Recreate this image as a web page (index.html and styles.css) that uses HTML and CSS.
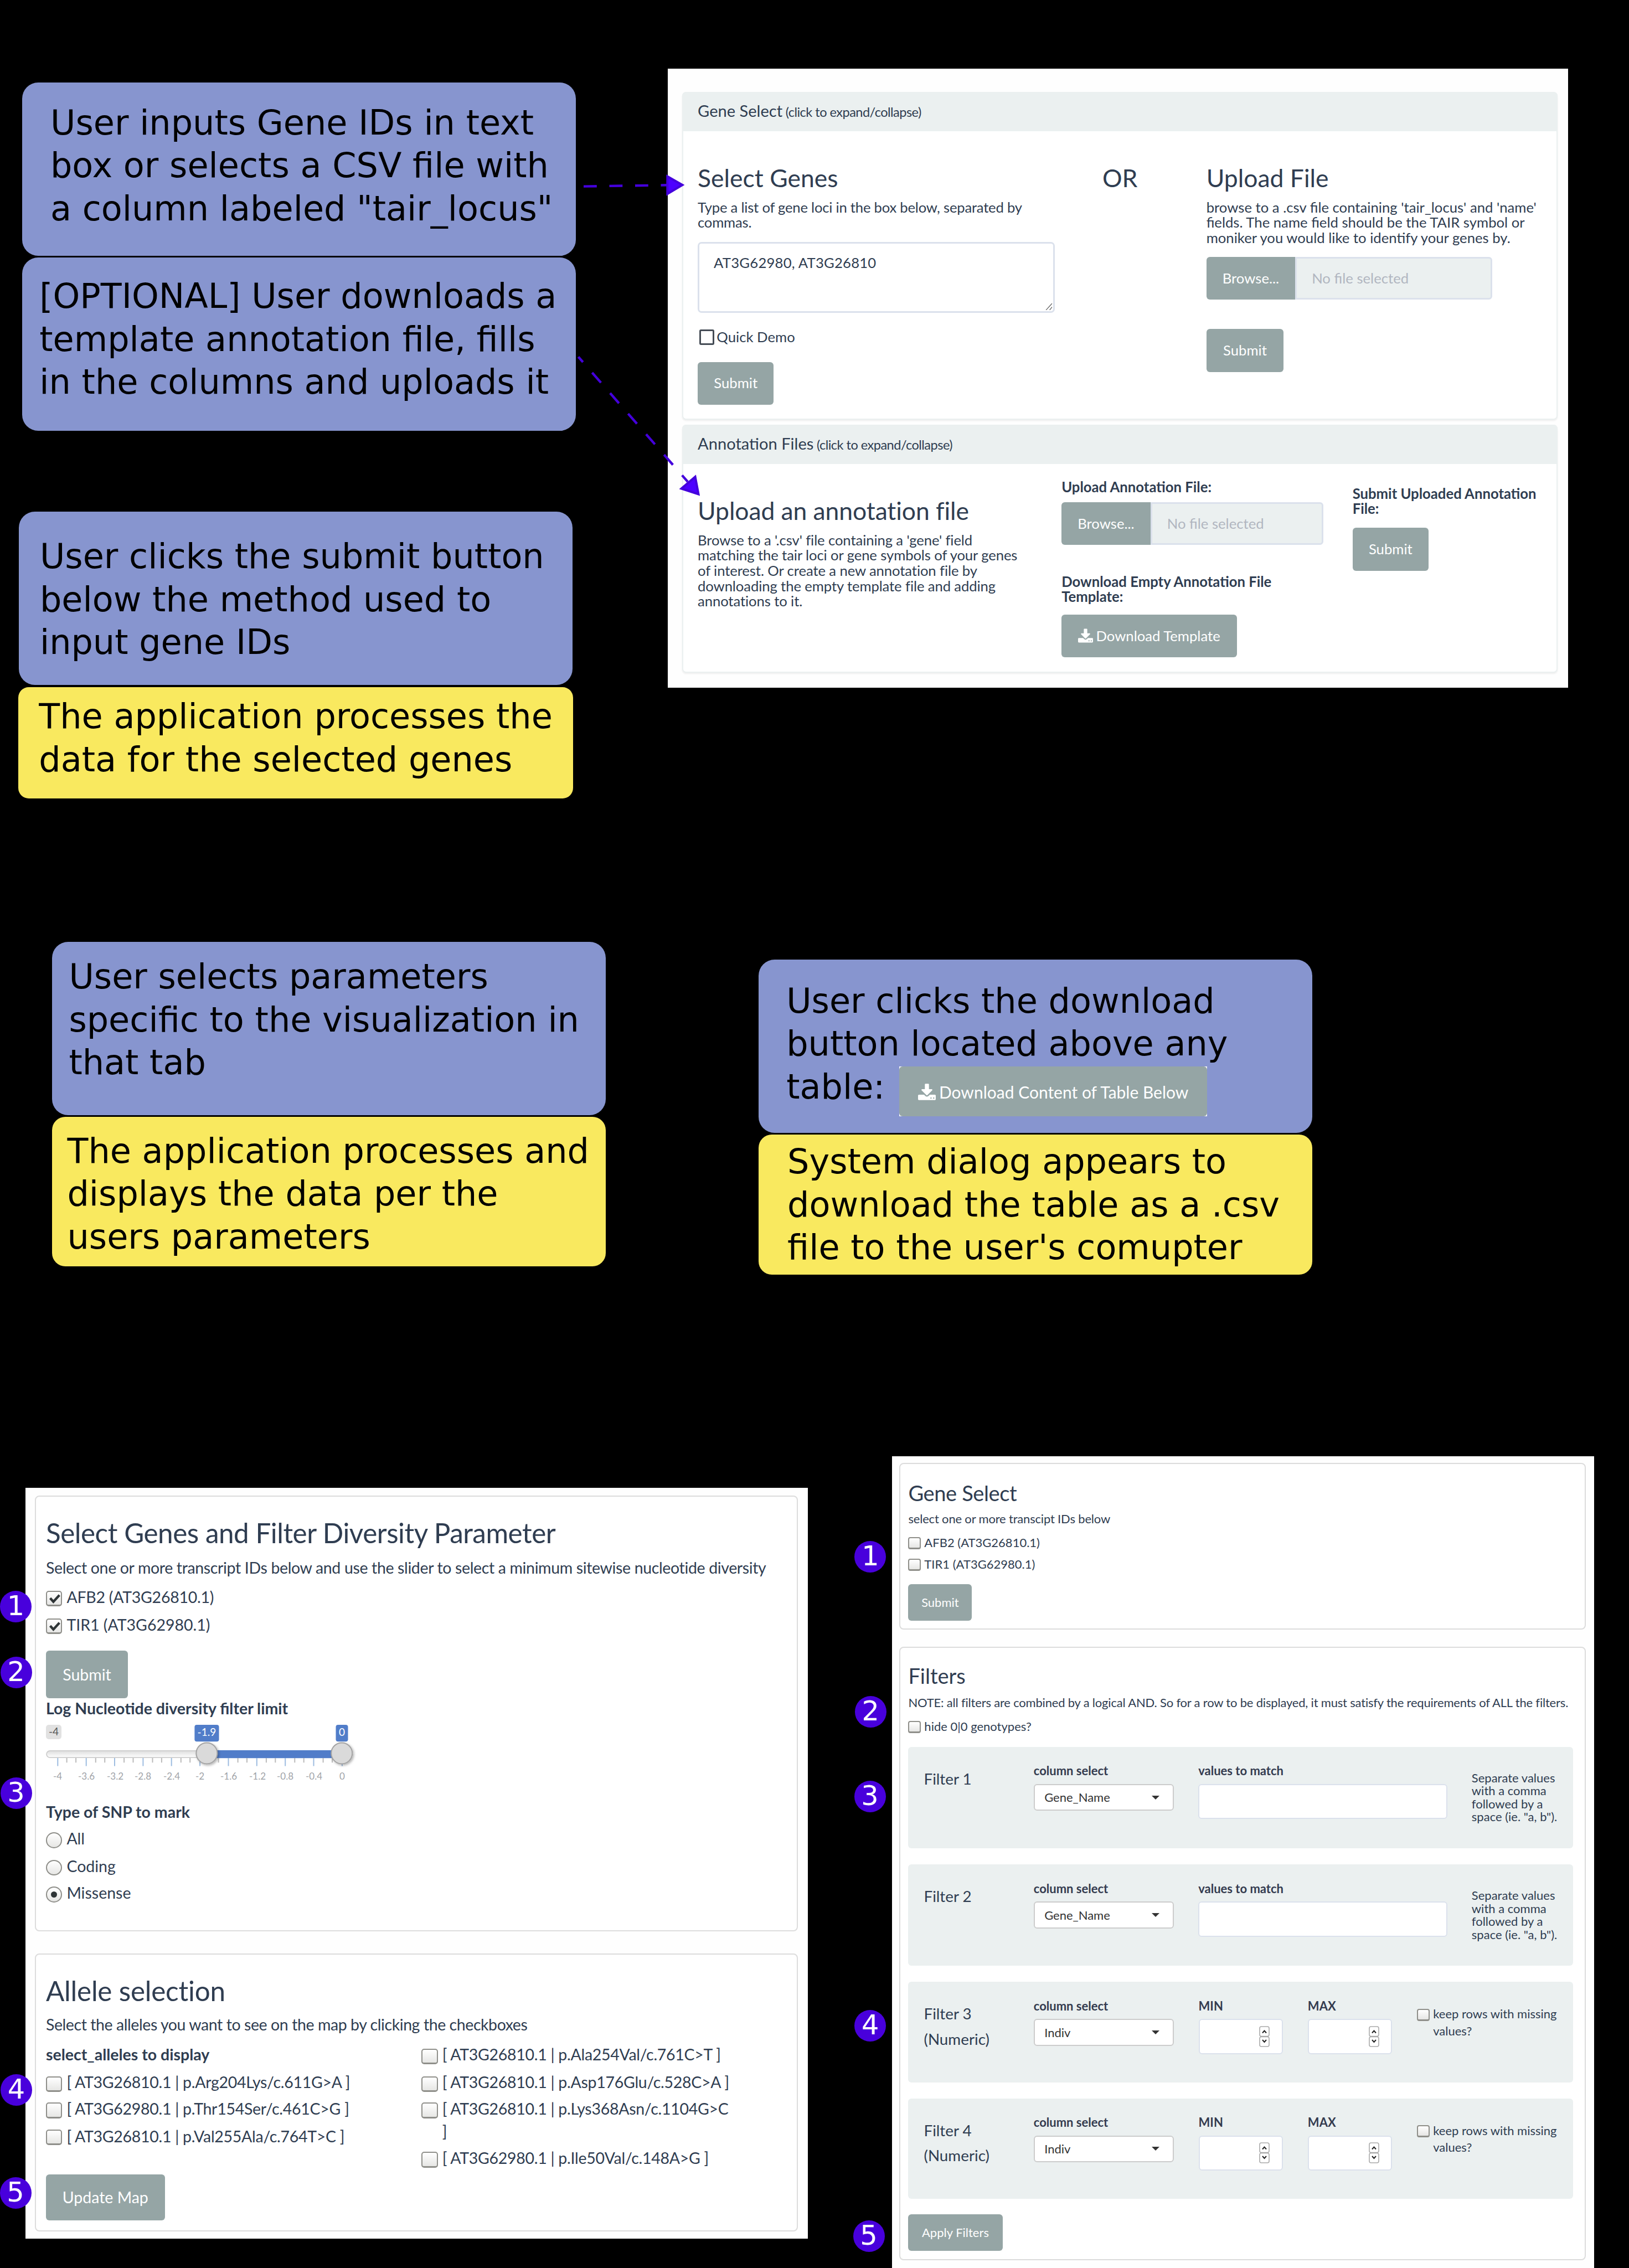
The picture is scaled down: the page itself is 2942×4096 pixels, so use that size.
FILE: index.html
```html
<!DOCTYPE html>
<html lang="en">
<head>
<meta charset="utf-8">
<title>Application workflow</title>
<link rel="stylesheet" href="styles.css">
</head>
<body>
<svg class="defs" width="0" height="0">
  <symbol id="download" viewBox="64 0 1664 1536"><path d="M1344 1344q0-26-19-45t-45-19-45 19-19 45 19 45 45 19 45-19 19-45zm256 0q0-26-19-45t-45-19-45 19-19 45 19 45 45 19 45-19 19-45zm128-224v320q0 40-28 68t-68 28h-1472q-40 0-68-28t-28-68v-320q0-40 28-68t68-28h465l135 136q58 56 136 56t136-56l136-136h464q40 0 68 28t28 68zm-325-569q17 41-14 70l-448 448q-18 19-45 19t-45-19l-448-448q-31-29-14-70 17-39 59-39h256v-448q0-26 19-45t45-19h256q26 0 45 19t19 45v448h256q42 0 59 39z"/></symbol>
</svg>
<main class="canvas">
  <div class="step step-1">User inputs Gene IDs in text<br>box or selects a CSV file with<br>a column labeled "tair_locus"</div>
  <div class="step step-2">[OPTIONAL] User downloads a<br>template annotation file, fills<br>in the columns and uploads it</div>
  <div class="step step-3">User clicks the submit button<br>below the method used to<br>input gene IDs</div>
  <div class="step step-4 app">The application processes the<br>data for the selected genes</div>
  <div class="step step-5">User selects parameters<br>specific to the visualization in<br>that tab</div>
  <div class="step step-6 app">The application processes and<br>displays the data per the<br>users parameters</div>
  <div class="step step-7">User clicks the download<br>button located above any<br>table:</div>
  <div class="step step-8 app">System dialog appears to<br>download the table as a .csv<br>file to the user's comupter</div>
  <div class="snippet"><div class="btn"><svg class="dl"><use href="#download"/></svg><span>Download Content of Table Below</span></div></div>

  <section class="panel inputs">
    <div class="card genes">
      <header>Gene Select<small>&nbsp;(click to expand/collapse)</small></header>
      <div class="body">
        <div class="col">
          <h3>Select Genes</h3>
          <p class="tight">Type a list of gene loci in the box below, separated by<br>commas.</p>
          <div class="textarea">AT3G62980, AT3G26810<svg class="grip" viewBox="0 0 12 12"><path d="M1 12L11 1M7 12L11 7"/></svg></div>
          <div class="demo"><i></i><span>Quick Demo</span></div>
          <div class="btn submit">Submit</div>
        </div>
        <div class="col"><h3 class="or">OR</h3></div>
        <div class="col">
          <h3>Upload File</h3>
          <p>browse to a .csv file containing 'tair_locus' and 'name'<br>fields. The name field should be the TAIR symbol or<br>moniker you would like to identify your genes by.</p>
          <div class="file"><div class="btn">Browse...</div><div class="name">No file selected</div></div>
          <div class="btn submit wide">Submit</div>
        </div>
      </div>
    </div>
    <div class="card annot">
      <header>Annotation Files<small>&nbsp;(click to expand/collapse)</small></header>
      <div class="body">
        <div class="col">
          <h3>Upload an annotation file</h3>
          <p class="about">Browse to a '.csv' file containing a 'gene' field<br>matching the tair loci or gene symbols of your genes<br>of interest. Or create a new annotation file by<br>downloading the empty template file and adding<br>annotations to it.</p>
        </div>
        <div class="col">
          <b class="lead">Upload Annotation File:</b>
          <div class="file"><div class="btn">Browse...</div><div class="name">No file selected</div></div>
          <b class="second">Download Empty Annotation File<br>Template:</b>
          <div class="btn template"><svg class="dl"><use href="#download"/></svg><span>Download Template</span></div>
        </div>
        <div class="col">
          <b class="right">Submit Uploaded Annotation<br>File:</b>
          <div class="btn submit">Submit</div>
        </div>
      </div>
    </div>
  </section>

  <section class="panel diversity">
    <div class="card params">
      <h3>Select Genes and Filter Diversity Parameter</h3>
      <p>Select one or more transcript IDs below and use the slider to select a minimum sitewise nucleotide diversity</p>
      <div class="check on c1"><i><svg viewBox="0 0 13 13"><path d="M2.6 6.2l3.2 3.6 6-6.6"/></svg></i><span>AFB2 (AT3G26810.1)</span></div>
      <div class="check on c2"><i><svg viewBox="0 0 13 13"><path d="M2.6 6.2l3.2 3.6 6-6.6"/></svg></i><span>TIR1 (AT3G62980.1)</span></div>
      <div class="btn submit">Submit</div>
      <b class="log">Log Nucleotide diversity filter limit</b>
      <svg class="slider" width="580" height="105" viewBox="0 0 580 105">
        <defs>
          <linearGradient id="rail" x1="0" y1="0" x2="0" y2="1"><stop offset="0" stop-color="#ddd"/><stop offset="1" stop-color="#fff"/></linearGradient>
          <filter id="soft" x="-30%" y="-30%" width="170%" height="170%"><feDropShadow dx="2" dy="2" stdDeviation="2" flood-opacity=".3"/></filter>
        </defs>
        <rect x="0" y="0" width="28" height="26" rx="5" fill="#e1e1e1"/>
        <rect x="268.4" y="0" width="44.1" height="30.2" rx="4" fill="#517dc9"/>
        <rect x="523.5" y="0" width="22" height="30.2" rx="4" fill="#517dc9"/>
        <rect x="1" y="46.8" width="552" height="12.4" rx="6.5" fill="url(#rail)" stroke="#ccc" stroke-width="1.7"/>
        <rect x="290" y="45.9" width="245" height="14.3" fill="#517dc9"/>
        <path class="major" d="M21.3 60V74.6M72.7 60V74.6M124 60V74.6M175.4 60V74.6M226.7 60V74.6M278.1 60V74.6M329.5 60V74.6M380.8 60V74.6M432.2 60V74.6M483.5 60V74.6M534.9 60V74.6"/>
        <path class="minor" d="M37.6 60V68.3M54.1 60V68.3M89.8 60V68.3M106.2 60V68.3M141.1 60V68.3M157.5 60V68.3M192.5 60V68.3M208.9 60V68.3M243.8 60V68.3M260.2 60V68.3M295.2 60V68.3M311.6 60V68.3M346.6 60V68.3M363 60V68.3M397.9 60V68.3M414.3 60V68.3M449.3 60V68.3M465.7 60V68.3M500.6 60V68.3M517 60V68.3"/>
        <g class="handles" filter="url(#soft)"><circle cx="290.4" cy="51.4" r="19"/><circle cx="534.2" cy="51.4" r="19"/></g>
        <g class="tags"><text class="min" x="14" y="19.2">-4</text><text x="290.4" y="20">-1.9</text><text x="534.6" y="20">0</text></g>
        <g class="scale"><text x="21" y="99">-4</text><text x="73" y="99">-3.6</text><text x="125" y="99">-3.2</text><text x="175" y="99">-2.8</text><text x="227" y="99">-2.4</text><text x="278" y="99">-2</text><text x="330" y="99">-1.6</text><text x="382" y="99">-1.2</text><text x="432" y="99">-0.8</text><text x="484" y="99">-0.4</text><text x="535" y="99">0</text></g>
      </svg>
      <b class="snp">Type of SNP to mark</b>
      <div class="check radio r1"><i></i><span>All</span></div>
      <div class="check radio r2"><i></i><span>Coding</span></div>
      <div class="check radio sel r3"><i></i><span>Missense</span></div>
    </div>
    <div class="card alleles">
      <h3>Allele selection</h3>
      <p>Select the alleles you want to see on the map by clicking the checkboxes</p>
      <div class="cols">
        <div>
          <b>select_alleles to display</b>
          <div class="check a1"><i></i><span>[ AT3G26810.1 | p.Arg204Lys/c.611G&gt;A ]</span></div>
          <div class="check a2"><i></i><span>[ AT3G62980.1 | p.Thr154Ser/c.461C&gt;G ]</span></div>
          <div class="check a3"><i></i><span>[ AT3G26810.1 | p.Val255Ala/c.764T&gt;C ]</span></div>
          <div class="btn update">Update Map</div>
        </div>
        <div>
          <div class="check a4"><i></i><span>[ AT3G26810.1 | p.Ala254Val/c.761C&gt;T ]</span></div>
          <div class="check a5"><i></i><span>[ AT3G26810.1 | p.Asp176Glu/c.528C&gt;A ]</span></div>
          <div class="check a6"><i></i><span>[ AT3G26810.1 | p.Lys368Asn/c.1104G&gt;C<br>]</span></div>
          <div class="check a7"><i></i><span>[ AT3G62980.1 | p.Ile50Val/c.148A&gt;G ]</span></div>
        </div>
      </div>
    </div>
  </section>

  <section class="panel table">
    <div class="card select">
      <h3>Gene Select</h3>
      <p>select one or more transcipt IDs below</p>
      <div class="check t1"><i></i><span>AFB2 (AT3G26810.1)</span></div>
      <div class="check t2"><i></i><span>TIR1 (AT3G62980.1)</span></div>
      <div class="btn submit">Submit</div>
    </div>
    <div class="card filters">
      <h3>Filters</h3>
      <p class="note">NOTE: all filters are combined by a logical AND. So for a row to be displayed, it must satisfy the requirements of ALL the filters.</p>
      <div class="check t3"><i></i><span>hide 0|0 genotypes?</span></div>
      <div class="wells">
        <div class="well">
          <h4>Filter 1</h4>
          <div><b>column select</b><div class="dropdown">Gene_Name<em></em></div></div>
          <div><b>values to match</b><div class="input"></div></div>
          <p class="hint">Separate values<br>with a comma<br>followed by a<br>space (ie. "a, b").</p>
        </div>
        <div class="well">
          <h4>Filter 2</h4>
          <div><b>column select</b><div class="dropdown">Gene_Name<em></em></div></div>
          <div><b>values to match</b><div class="input"></div></div>
          <p class="hint">Separate values<br>with a comma<br>followed by a<br>space (ie. "a, b").</p>
        </div>
        <div class="well numeric">
          <h4>Filter 3<br>(Numeric)</h4>
          <div><b>column select</b><div class="dropdown">Indiv<em></em></div></div>
          <div><b>MIN</b><div class="input num"><svg class="spin" viewBox="0 0 19 38"><rect x="1" y="1" width="17" height="17.5" rx="3"/><rect x="1" y="19.5" width="17" height="17.5" rx="3"/><path d="M6 12.5L9.5 8.5L13 12.5M6 25L9.5 29L13 25"/></svg></div></div>
          <div><b>MAX</b><div class="input num"><svg class="spin" viewBox="0 0 19 38"><rect x="1" y="1" width="17" height="17.5" rx="3"/><rect x="1" y="19.5" width="17" height="17.5" rx="3"/><path d="M6 12.5L9.5 8.5L13 12.5M6 25L9.5 29L13 25"/></svg></div></div>
          <div class="check keep"><i></i><span>keep rows with missing<br>values?</span></div>
        </div>
        <div class="well numeric">
          <h4>Filter 4<br>(Numeric)</h4>
          <div><b>column select</b><div class="dropdown">Indiv<em></em></div></div>
          <div><b>MIN</b><div class="input num"><svg class="spin" viewBox="0 0 19 38"><rect x="1" y="1" width="17" height="17.5" rx="3"/><rect x="1" y="19.5" width="17" height="17.5" rx="3"/><path d="M6 12.5L9.5 8.5L13 12.5M6 25L9.5 29L13 25"/></svg></div></div>
          <div><b>MAX</b><div class="input num"><svg class="spin" viewBox="0 0 19 38"><rect x="1" y="1" width="17" height="17.5" rx="3"/><rect x="1" y="19.5" width="17" height="17.5" rx="3"/><path d="M6 12.5L9.5 8.5L13 12.5M6 25L9.5 29L13 25"/></svg></div></div>
          <div class="check keep"><i></i><span>keep rows with missing<br>values?</span></div>
        </div>
      </div>
      <div class="btn apply">Apply Filters</div>
    </div>
  </section>

  <svg class="arrows" width="300" height="620" viewBox="1000 300 300 620">
    <path class="line" stroke-dasharray="23.8 22.7" d="M1054 336.6L1206 334.3"/>
    <path class="line" stroke-dasharray="24.2 25.1" stroke-dashoffset="11.5" d="M1044.5 644.5L1242 870"/>
    <path class="head" d="M1205.3 318.5L1232.5 334L1205.3 350.3Z"/>
    <path class="head" d="M1255.6 861L1261.5 892.5L1230.5 882.5Z"/>
  </svg>

  <span class="badge l1">1</span><span class="badge l2">2</span><span class="badge l3">3</span><span class="badge l4">4</span><span class="badge l5">5</span>
  <span class="badge m1">1</span><span class="badge m2">2</span><span class="badge m3">3</span><span class="badge m4">4</span><span class="badge m5">5</span>
</main>
</body>
</html>
```
FILE: styles.css
```css
* { box-sizing: border-box; margin: 0; padding: 0; }
html, body { width: 2942px; height: 4096px; overflow: hidden; background: #000; }
.defs { position: absolute; }
.canvas { position: relative; width: 2942px; height: 4096px; overflow: hidden; font-family: Lato, sans-serif; color: #2f3d51; white-space: nowrap; }
h3, h4 { font-weight: 400; }
b { display: block; font-weight: 700; }

/* Workflow step boxes */
.step { position: absolute; width: 1000.2px; height: 313px; border-radius: 29px; background: #8795cf; color: #000; font: 62.06px/77.57px "DejaVu Sans", sans-serif; }
.app { background: #f9e95f; border-radius: 24px; }
.step-1 { left: 40.3px; top: 148.9px; padding: 33.8px 0 0 50.7px; }
.step-2 { left: 40.3px; top: 465.3px; padding: 31px 0 0 31px; }
.step-3 { left: 34.1px; top: 924.1px; padding: 42px 0 0 37.8px; }
.step-4 { left: 33.4px; top: 1240.7px; width: 1001.9px; height: 200.9px; padding: 14.6px 0 0 36.9px; border-radius: 19px; }
.step-5 { left: 93.9px; top: 1701.2px; padding: 23.9px 0 0 30.5px; }
.step-6 { left: 93.9px; top: 2016.8px; height: 270.3px; padding: 23px 0 0 27.6px; }
.step-7 { left: 1370.2px; top: 1733px; padding: 35.6px 0 0 50px; }
.step-8 { left: 1370.2px; top: 2049.2px; height: 253.3px; padding: 9.8px 0 0 51.9px; }

/* Shared pieces */
.btn { display: flex; align-items: center; justify-content: center; background: #95a5a5; color: #fff; border-radius: 6px; }
.dl { fill: #fff; }
.panel { position: absolute; background: #fefefe; }
.card { background: #fff; border: 2px solid #dcdcdc; border-radius: 8px; }
.check { display: flex; }
.check i { flex: none; background: linear-gradient(#fff, #e6e6e4); border: 2px solid #8f8f8a; border-bottom-width: 3px; border-radius: 5px; }
.check svg { display: block; width: 100%; height: 100%; overflow: visible; fill: none; stroke: #2e3436; stroke-width: 2.4; }

.snippet { position: absolute; left: 1624px; top: 1926px; width: 556.4px; height: 90.4px; background: #fff; }
.snippet .btn { height: 100%; font-size: 30px; gap: 6px; padding-top: 1px; }
.snippet .dl { width: 32px; height: 30px; }

/* Gene and annotation inputs */
.inputs { left: 1205.9px; top: 124.1px; width: 1626.6px; height: 1118.3px; padding: 41.9px 0 0 26.5px; font-size: 25.7px; line-height: 27.6px; }
.inputs .card { width: 1580.4px; border-color: #ebf0f0; border-radius: 7px; box-shadow: 0 2px 3px #0001; }
.inputs header { display: flex; align-items: baseline; margin: -2px; padding: 17px 0 0 27.7px; height: 71px; line-height: 33px; background: #ebf0f0; font-size: 29.1px; border-radius: 7px 7px 0 0; }
.inputs small { font-size: 23.6px; letter-spacing: -.54px; }
.inputs .body { display: grid; margin-left: 25.7px; }
.inputs h3 { margin-top: 60.8px; font-size: 44.5px; line-height: 50px; }
.inputs p { margin-top: 15px; }
.inputs .tight { letter-spacing: -.24px; }
.inputs .about { letter-spacing: -.12px; }
.inputs b { line-height: 27.5px; }
.genes { height: 591.9px; }
.genes .body { grid-template-columns: 730.9px 187.7px 1fr; }
.annot { height: 447.8px; margin-top: 9.2px; }
.annot .body { grid-template-columns: 657.1px 525.5px 1fr; }
.annot h3 { letter-spacing: -.1px; }
.textarea { position: relative; margin-top: 21.1px; width: 644.6px; height: 128.2px; border: 3.4px solid #dbe1ec; border-radius: 7px; padding: 21px 26px; letter-spacing: .2px; }
.grip { position: absolute; right: 1px; bottom: 2px; width: 13px; height: 13px; fill: none; stroke: #444; stroke-width: 1; }
.demo { display: flex; align-items: center; gap: 3.9px; margin: 30.1px 0 0 2.7px; height: 27.2px; }
.demo i { width: 27.7px; height: 27.2px; border: 3.5px solid #454c55; border-radius: 3px; }
.inputs .submit { width: 137.4px; height: 77.4px; margin-top: 31px; }
.file { display: flex; height: 77.1px; margin-top: 20.2px; }
.file .btn { width: 160.5px; border-radius: 6px 0 0 6px; }
.file .name { display: flex; align-items: center; width: 356.3px; padding-left: 27px; background: #ebf0f0; border: 3.4px solid #dbe1ec; border-radius: 0 6px 6px 0; color: #b1b6c0; }
.inputs .wide { width: 139.7px; margin-top: 53.6px; }
.annot .file { margin-top: 13.8px; }
.annot .file .name { width: 312.4px; }
.lead { margin-top: 29.9px; }
.second { margin-top: 52.2px; }
.right { margin-top: 41.9px; }
.annot .submit { margin-top: 20.3px; }
.template { width: 316.8px; height: 77.7px; margin-top: 18.1px; gap: 5px; }
.template .dl { width: 27px; height: 26px; }

/* Diversity parameters */
.diversity { left: 46px; top: 2687.1px; width: 1412.6px; height: 1356px; padding: 13.6px 0 0 17.1px; font-size: 28.5px; line-height: 34px; }
.diversity .card { width: 1377.5px; padding: 35.4px 0 0 17.9px; }
.params { height: 787.6px; }
.alleles { height: 501.8px; margin-top: 39.6px; }
.diversity h3 { font-size: 49.4px; line-height: 60px; letter-spacing: -.46px; }
.diversity p { margin-top: 16.1px; letter-spacing: -.36px; }
.diversity .check { height: 28.6px; gap: 8px; }
.diversity .check i { width: 29.4px; height: 28.6px; }
.diversity .check span { line-height: 40.9px; margin-top: -9.2px; }
.diversity .radio i { border-radius: 50%; border-width: 2px; }
.sel i { display: flex; align-items: center; justify-content: center; }
.sel i::after { content: ""; width: 11px; height: 11px; border-radius: 50%; background: #2e3436; }
.c1 { margin-top: 24.6px; letter-spacing: -.25px; }
.c2 { margin-top: 21.4px; }
.params .submit { margin-top: 29.7px; width: 148px; height: 85.6px; }
.log { margin-top: 1.3px; }
.slider { display: block; margin-top: 13.2px; overflow: visible; text-anchor: middle; }
.major { stroke: #9dbce0; stroke-width: 2; }
.minor { stroke: #bbb; stroke-width: 2; }
.handles { fill: #dadada; stroke: #a3a3a3; stroke-width: 2; }
.tags { fill: #fff; font-size: 19px; }
.tags .min { fill: #555; }
.scale { fill: #a0a3a8; font-size: 17px; }
.snp { margin-top: 35px; }
.r1 { margin-top: 20px; }
.r2 { margin-top: 21.2px; }
.r3 { margin-top: 19.8px; }
.alleles h3 { letter-spacing: -.2px; }
.alleles p { margin-top: 14px; letter-spacing: -.43px; }
.alleles .check { letter-spacing: -.28px; }
.cols { display: grid; grid-template-columns: 678.3px 1fr; }
.cols b { margin-top: 19.5px; }
.a1 { margin-top: 22.9px; }
.a2, .a6 { margin-top: 19px; }
.a3 { margin-top: 19.7px; }
.alleles .a3 span { margin-top: -7.8px; }
.a4 { margin-top: 26.3px; }
.a5 { margin-top: 21.5px; }
.a7 { margin-top: 60.2px; }
.update { width: 214.6px; height: 83.2px; margin-top: 52.4px; }

/* Table filters */
.table { left: 1611.2px; top: 2630.3px; width: 1267.6px; height: 1480px; padding: 11.4px 0 0 13.1px; font-size: 22px; line-height: 26px; }
.table .card { width: 1240.1px; padding: 29.6px 0 0 14.1px; }
.select { height: 301.3px; }
.select h3 { letter-spacing: -.4px; }
.select p { letter-spacing: -.18px; }
.table .filters { height: 1108.2px; margin-top: 30.7px; padding-top: 27.6px; }
.table h3 { font-size: 38.1px; line-height: 46px; }
.table p { margin-top: 10.9px; }
.table .check { height: 22px; gap: 6.4px; }
.table .check i { width: 22.6px; height: 22px; border-radius: 4px; }
.table .check span { line-height: 30.6px; margin-top: -5.6px; }
.t1 { margin-top: 20.2px; }
.t2 { margin-top: 16.9px; }
.table .submit { width: 115.1px; height: 65.9px; margin-top: 24px; }
.table .note { margin-top: 12.4px; letter-spacing: -.19px; }
.t3 { margin-top: 20.6px; }
.wells { display: grid; gap: 29.5px; margin-top: 24.5px; }
.well { display: grid; grid-template-columns: 198.3px 297.4px 493.7px 1fr; width: 1200.9px; height: 183px; padding-left: 28.1px; background: #ebf0f0; border-radius: 6px; }
.numeric { grid-template-columns: 198.3px 297.8px 197.3px 197.4px 1fr; height: 181.3px; margin-top: -.5px; }
.well h4 { font-size: 27.8px; line-height: 45.4px; margin-top: 35.2px; }
.well b { margin-top: 30.7px; color: #343b4f; }
.dropdown { display: flex; align-items: center; justify-content: space-between; width: 253.4px; height: 48.4px; margin-top: 10.4px; padding: 0 24px 0 17.4px; border: 2px solid #ccc; border-radius: 6px; background: #fff; color: #333; }
.dropdown em { border: 7px solid transparent; border-top-color: #333; border-bottom: 0; }
.input { width: 450px; height: 63.6px; margin-top: 10.4px; background: #fff; border: 2.6px solid #dbe1ec; border-radius: 6px; }
.num { display: flex; align-items: center; justify-content: flex-end; width: 152.2px; padding-right: 21.5px; }
.spin { width: 19px; height: 38px; fill: #fff; stroke: #aaa; stroke-width: 1.6; }
.spin path { fill: none; stroke: #222; stroke-width: 2; }
.table .hint { margin-top: 43.8px; line-height: 23.6px; }
.keep { margin-top: 48.8px; }
.apply { width: 170.2px; height: 66.3px; margin-top: 28.2px; }

/* Connectors and number markers */
.arrows { position: absolute; left: 1000px; top: 300px; }
.line { fill: none; stroke: #4400dc; stroke-width: 4.4; }
.head { fill: #4d00ff; stroke: #4400dc; stroke-width: 4; }
.badge { position: absolute; width: 57px; height: 57px; border-radius: 50%; background: #4800dc; color: #fff; font: 49.4px/55.5px "DejaVu Sans", sans-serif; text-align: center; }
.l1 { left: 0; top: 2873px; }
.l2 { left: .5px; top: 2992.2px; }
.l3 { left: .5px; top: 3209.5px; }
.l4 { left: .9px; top: 3745.6px; }
.l5 { left: -.5px; top: 3932px; }
.m1 { left: 1543.4px; top: 2783px; }
.m2 { left: 1543.8px; top: 3063.2px; }
.m3 { left: 1542.5px; top: 3216.4px; }
.m4 { left: 1543.2px; top: 3630.2px; }
.m5 { left: 1540.5px; top: 4009.6px; }
```
